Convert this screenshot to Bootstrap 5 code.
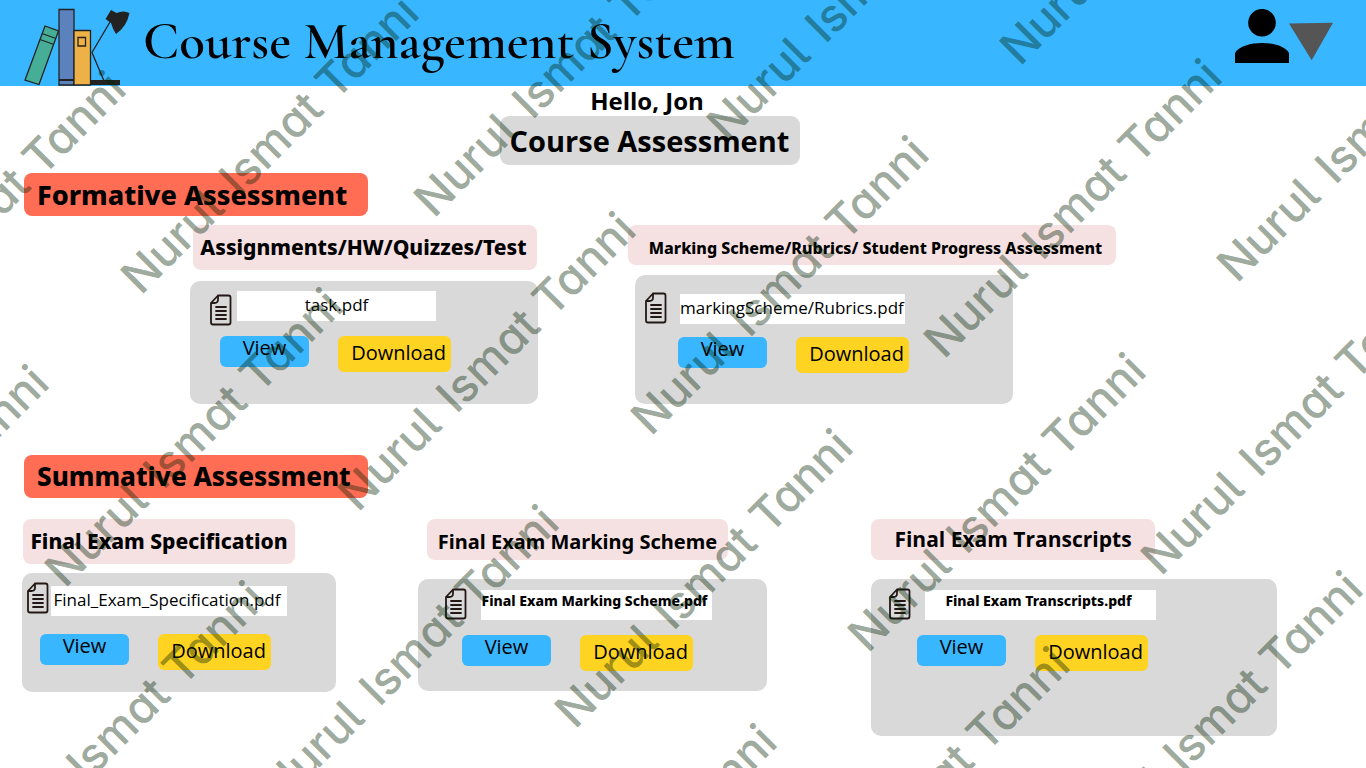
<!DOCTYPE html>
<html lang="en">
<head>
<meta charset="utf-8">
<meta name="viewport" content="width=device-width, initial-scale=1">
<title>Course Management System</title>
<link href="https://cdn.jsdelivr.net/npm/bootstrap@5.3.0/dist/css/bootstrap.min.css" rel="stylesheet">
<style>
  body { font-family: "Open Sans", "Noto Sans", sans-serif; color: #000; background: #fff; min-height: 100vh; overflow-x: hidden; }
  .topbar { background: #38b6ff; min-height: 86px; padding: 0 33px 0 24px; }
  .brand-title { font-family: "Cormorant Garamond", "Liberation Serif", serif; font-size: 53px; line-height: 64px; font-weight: 600; padding-bottom: 4px; margin-left: 11px; }
  .account-btn { margin-top: 9px; }
  .intro { padding-right: 66px; }
  .greeting { font-size: 24px; line-height: 30px; font-weight: 700; padding-right: 6px; }
  .page-title { font-size: 29px; line-height: 49px; font-weight: 700; padding: 0 11px 0 10px; background: #d9d9d9; border-radius: 9px; }
  .section-tag { width: 344px; margin-left: 24px; padding-left: 13px; font-family: "Noto Sans", sans-serif; font-size: 27px; line-height: 43px; font-weight: 800; background: #ff6d55; border-radius: 8px; }
  .summative-tag { font-size: 26px; }

  .board { display: grid; align-items: start; }
  .board-formative { grid-template-columns: 438fr 738fr; padding-left: 190px; margin-top: 9px; }
  .board-summative { grid-template-columns: 396fr 453fr 495fr; padding-left: 22px; margin-top: 21px; }
  .summative { margin-top: 51px; }
  .board-label { font-family: "Noto Sans", sans-serif; background: #f6e1e2; border-radius: 8px; font-size: 21px; line-height: 41px; font-weight: 800; text-align: center; white-space: nowrap; }
  .tall { line-height: 45px; }
  .panel { background: #d9d9d9; border-radius: 10px; }
  .file-name { background: #fff; height: 30px; line-height: 28px; font-size: 17px; text-align: center; white-space: nowrap; }
  .file-strong { font-size: 14px; line-height: 22px; font-weight: 800; font-family: "Noto Sans", sans-serif; }
  .doc-icon { width: 22px; height: 32px; flex: none; }
  .actions { display: flex; align-items: flex-start; gap: 29px; }
  .actions button { border: 0; border-radius: 6px; font-size: 20px; line-height: 24px; color: #000; white-space: nowrap; }
  .view-btn { width: 89px; height: 31px; padding: 0 0 7px; background: #38b6ff; }
  .save-btn { width: 113px; height: 36px; padding: 0 0 2px 8px; background: #ffd322; }

  .assign .board-label { width: 344px; margin-left: 3px; padding-right: 3px; }
  .assign .panel { width: 348px; min-height: 123px; margin-top: 11px; padding: 10px 20px; }
  .assign .file-name { width: 199px; margin-left: 5px; }
  .assign .doc-icon { margin-top: 3px; }
  .assign .actions { margin: 10px 0 0 10px; }

  .rubric .board-label { width: 488px; font-size: 16px; line-height: 34px; padding: 6px 0 0 7px; }
  .rubric .panel { width: 378px; min-height: 129px; margin: 10px 0 0 7px; padding: 17px 10px; }
  .rubric .file-name { width: 225px; margin: 2px 0 0 13px; padding-right: 4px; }
  .rubric .actions { margin: 13px 0 0 33px; }

  .spec .board-label { width: 272px; margin-left: 1px; }
  .spec .panel { width: 314px; min-height: 119px; margin-top: 9px; padding: 9px 5px; }
  .spec .file-name { width: 236px; margin: 4px 0 0 2px; padding-right: 4px; }
  .spec .actions { margin: 18px 0 0 13px; }

  .scheme .board-label { width: 301px; margin-left: 9px; padding-top: 4px; line-height: 37px; font-size: 20px; font-weight: 700; }
  .scheme .panel { width: 349px; min-height: 112px; margin-top: 19px; padding: 9px 27px; }
  .scheme .file-name { width: 231px; margin: 2px 0 0 14px; padding-right: 4px; }
  .scheme .actions { margin: 15px 0 0 17px; }

  .transcript .board-label { width: 284px; font-family: "Open Sans", sans-serif; font-weight: 700; }
  .transcript .panel { width: 406px; min-height: 157px; margin-top: 19px; padding: 9px 18px; }
  .transcript .file-name { width: 231px; margin: 2px 0 0 14px; padding-right: 4px; }
  .transcript .actions { margin: 15px 0 0 28px; }

  .watermark { font-family: Inter, "Noto Sans", sans-serif; font-size: 46px; font-weight: 500; font-feature-settings: "cv11", "cv05"; pointer-events: none; overflow: hidden; }
</style>
</head>
<body class="position-relative">

<header class="topbar d-flex align-items-start justify-content-between">
  <div class="d-flex align-items-center">
    <svg width="108" height="86" viewBox="0 0 108 86" aria-hidden="true">
      <g stroke="#222" stroke-width="1.3">
        <path fill="#46ad96" d="M21 26 34.500 31 15 84.500 1 80z"/>
        <path fill="none" d="m18 33.500 14 5M16 39.500l14 5"/>
        <path fill="#5c82bd" d="M35 9.500h15V85H35z"/>
        <path fill="#edb148" d="M50 30.500h16.500V85H50z"/>
        <path fill="none" d="M54 37.500h7.500V46H54z"/>
        <path stroke-width="2" d="M35 80h15"/>
        <path fill="none" d="m86 22-18 30.500L80 81"/>
      </g>
      <path fill="#222" d="M66 80h30v5H66zM87 10l5.500 3q7-3 13 0-3 14-13.500 21-3-4-5-11l-5.500-4z"/>
    </svg>
    <h1 class="brand-title mb-0">Course Management System</h1>
  </div>
  <button class="account-btn btn p-0 border-0 d-flex" type="button" aria-label="Account menu">
    <svg width="98" height="55" viewBox="0 0 98 55" aria-hidden="true">
      <circle cx="27" cy="13.700" r="13.800"/>
      <path d="M0 54V44C4 37 16 34 27 34s23 3 27 10v10z"/>
      <path fill="#555" d="m54 14.500 44-.8-21.300 37.500z"/>
    </svg>
  </button>
</header>

<main>
  <div class="intro d-flex flex-column align-items-center">
    <p class="greeting mb-0">Hello, Jon</p>
    <h2 class="page-title mb-0">Course Assessment</h2>
  </div>

  <section class="mt-2">
    <h3 class="section-tag mb-0">Formative Assessment</h3>
    <div class="board board-formative">
      <article class="assign">
        <h4 class="board-label tall mb-0">Assignments/HW/Quizzes/Test</h4>
        <div class="panel">
          <div class="d-flex">
            <svg class="doc-icon" viewBox="0 0 22 32" aria-hidden="true"><g id="doc" fill="none" stroke="#231815" stroke-width="1.800" stroke-linejoin="round" stroke-linecap="round"><path d="M8 1.500h10.500q2 0 2 2v25q0 2-2 2H3q-2 0-2-2V9zM8 1.500v4Q8 9 4.500 9H1"/><path d="M6 13h10M6 17h10M6 21h10M6 25h10"/></g></svg>
            <div class="file-name">task.pdf</div>
          </div>
          <div class="actions"><button type="button" class="view-btn">View</button><button type="button" class="save-btn">Download</button></div>
        </div>
      </article>
      <article class="rubric">
        <h4 class="board-label mb-0">Marking Scheme/Rubrics/ Student Progress Assessment</h4>
        <div class="panel">
          <div class="d-flex">
            <svg class="doc-icon" viewBox="0 0 22 32" aria-hidden="true"><use href="#doc"/></svg>
            <div class="file-name">markingScheme/Rubrics.pdf</div>
          </div>
          <div class="actions"><button type="button" class="view-btn">View</button><button type="button" class="save-btn">Download</button></div>
        </div>
      </article>
    </div>
  </section>

  <section class="summative">
    <h3 class="section-tag summative-tag mb-0">Summative Assessment</h3>
    <div class="board board-summative">
      <article class="spec">
        <h4 class="board-label tall mb-0">Final Exam Specification</h4>
        <div class="panel">
          <div class="d-flex">
            <svg class="doc-icon" viewBox="0 0 22 32" aria-hidden="true"><use href="#doc"/></svg>
            <div class="file-name">Final_Exam_Specification.pdf</div>
          </div>
          <div class="actions"><button type="button" class="view-btn">View</button><button type="button" class="save-btn">Download</button></div>
        </div>
      </article>
      <article class="scheme">
        <h4 class="board-label mb-0">Final Exam Marking Scheme</h4>
        <div class="panel">
          <div class="d-flex">
            <svg class="doc-icon" viewBox="0 0 22 32" aria-hidden="true"><use href="#doc"/></svg>
            <div class="file-name file-strong">Final Exam Marking Scheme.pdf</div>
          </div>
          <div class="actions"><button type="button" class="view-btn">View</button><button type="button" class="save-btn">Download</button></div>
        </div>
      </article>
      <article class="transcript">
        <h4 class="board-label mb-0">Final Exam Transcripts</h4>
        <div class="panel">
          <div class="d-flex">
            <svg class="doc-icon" viewBox="0 0 22 32" aria-hidden="true"><use href="#doc"/></svg>
            <div class="file-name file-strong">Final Exam Transcripts.pdf</div>
          </div>
          <div class="actions"><button type="button" class="view-btn">View</button><button type="button" class="save-btn">Download</button></div>
        </div>
      </article>
    </div>
  </section>
</main>

<!-- Author's name repeated diagonally over the whole page -->
<svg class="watermark position-absolute top-0 start-0 w-100 h-100" fill="#002000" fill-opacity=".4" aria-hidden="true">
  <defs><text id="mark" transform="rotate(-45)"><tspan x="-3">Nurul</tspan><tspan x="136">Ismat</tspan><tspan x="272">Tanni</tspan></text></defs>
  <use href="#mark" x="219" y="-1"/>
  <use href="#mark" x="-150" y="370"/>
  <use href="#mark" x="143" y="294"/>
  <use href="#mark" x="436" y="217"/>
  <use href="#mark" x="729" y="141"/>
  <use href="#mark" x="1022" y="65"/>
  <use href="#mark" x="-227" y="664"/>
  <use href="#mark" x="67" y="587"/>
  <use href="#mark" x="360" y="511"/>
  <use href="#mark" x="653" y="435"/>
  <use href="#mark" x="946" y="358"/>
  <use href="#mark" x="1239" y="282"/>
  <use href="#mark" x="-10" y="880"/>
  <use href="#mark" x="283" y="804"/>
  <use href="#mark" x="577" y="728"/>
  <use href="#mark" x="870" y="652"/>
  <use href="#mark" x="1163" y="575"/>
  <use href="#mark" x="501" y="1023"/>
  <use href="#mark" x="794" y="946"/>
  <use href="#mark" x="1087" y="870"/>
</svg>

<script src="https://cdn.jsdelivr.net/npm/bootstrap@5.3.0/dist/js/bootstrap.bundle.min.js"></script>
</body>
</html>
